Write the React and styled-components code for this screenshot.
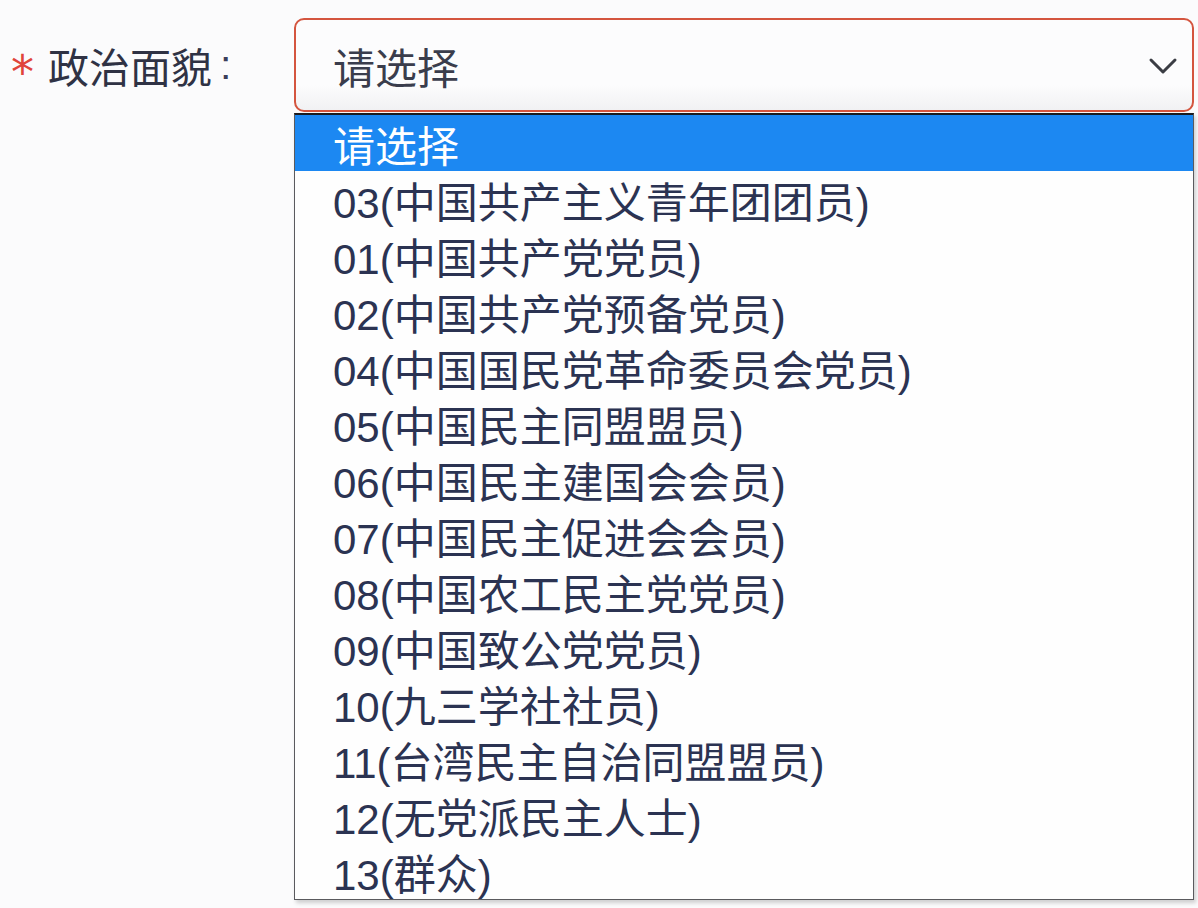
import React from 'react';
import styled, { createGlobalStyle } from 'styled-components';

const GlobalStyle = createGlobalStyle`
  html, body {
    margin: 0;
    padding: 0;
    background: #fbfbfc;
  }
  body {
    font-family: "Liberation Sans", "Noto Sans CJK SC", sans-serif;
  }
`;

const options = [
  '03(中国共产主义青年团团员)',
  '01(中国共产党党员)',
  '02(中国共产党预备党员)',
  '04(中国国民党革命委员会党员)',
  '05(中国民主同盟盟员)',
  '06(中国民主建国会会员)',
  '07(中国民主促进会会员)',
  '08(中国农工民主党党员)',
  '09(中国致公党党员)',
  '10(九三学社社员)',
  '11(台湾民主自治同盟盟员)',
  '12(无党派民主人士)',
  '13(群众)',
];

// Styled Components
const Page = styled.div`
  width: 1198px;
  height: 908px;
  overflow: hidden;
  padding-top: 18px;
  box-sizing: border-box;
`;

const FormRow = styled.div`
  display: flex;
  align-items: flex-start;
`;

const Label = styled.label`
  width: 294px;
  height: 94px;
  display: flex;
  align-items: center;
  padding-left: 11px;
  box-sizing: border-box;
  font-size: 41px;
  color: #2f3244;
  .star {
    color: #e0443a;
    font-size: 46px;
    margin-right: 14px;
    margin-top: 14px;
    font-family: "DejaVu Sans", sans-serif;
  }
  .colon {
    margin-left: 8px;
    color: #3b3e5a;
  }
`;

const SelectWrap = styled.div`
  position: relative;
  width: 900px;
`;

const SelectBox = styled.div`
  height: 94px;
  border: 2px solid #d4553f;
  border-radius: 10px;
  box-sizing: border-box;
  background: linear-gradient(#fcfcfd 0%, #fcfcfd 72%, #f1f1f3 100%);
  display: flex;
  align-items: center;
  justify-content: space-between;
  padding: 0 14px 0 37px;
  font-size: 42px;
  color: #3a3d4c;
`;

const Chevron = styled.svg`
  width: 30px;
  height: 20px;
  margin-top: 2px;
`;

const List = styled.ul`
  position: absolute;
  top: 95px;
  left: 0;
  width: 900px;
  margin: 0;
  padding: 0;
  list-style: none;
  background: #fefefe;
  border: 1px solid #5a5a5e;
  border-top: 2px solid #1b1b1f;
  box-sizing: border-box;
  box-shadow: 2px 3px 4px rgba(0, 0, 0, 0.18);
`;

const Option = styled.li`
  height: 56px;
  box-sizing: border-box;
  display: flex;
  align-items: center;
  padding: 1px 0 0 38px;
  font-size: 42px;
  white-space: nowrap;
  color: ${(props) => (props.active ? '#ffffff' : '#2b3352')};
  background: ${(props) => (props.active ? '#1c88f2' : 'transparent')};
`;

const App = () => {
  return (
    <Page>
      <GlobalStyle />
      <FormRow>
        <Label>
          <span className='star'>*</span>
          政治面貌<span className='colon'>:</span>
        </Label>
        <SelectWrap>
          <SelectBox>
            <span>请选择</span>
            <Chevron viewBox='0 0 30 20'>
              <path
                d='M3 4 L15 16 L27 4'
                fill='none'
                stroke='#3b3d44'
                strokeWidth='3'
                strokeLinecap='round'
                strokeLinejoin='round'
              />
            </Chevron>
          </SelectBox>
          <List>
            <Option active>请选择</Option>
            {options.map((item) => (
              <Option key={item}>{item}</Option>
            ))}
          </List>
        </SelectWrap>
      </FormRow>
    </Page>
  );
};

export default App;
